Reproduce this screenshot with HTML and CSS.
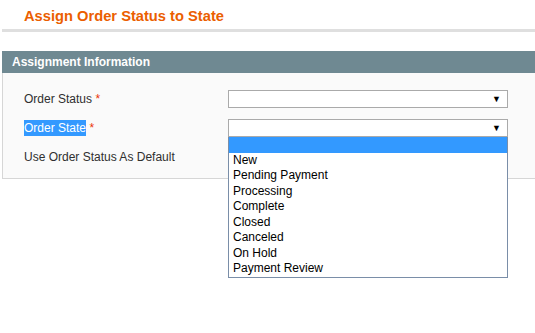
FILE: index.html
```html
<!DOCTYPE html>
<html>
<head>
<meta charset="utf-8">
<link rel="stylesheet" href="styles.css">
</head>
<body>
<div class="content-header">
  <h3 class="title">Assign Order Status to State</h3>
</div>
<div class="entry-edit">
  <div class="head">Assignment Information</div>
  <div class="fieldset">
    <div class="row">
      <div class="label">Order Status <span class="req">*</span></div>
      <div class="select"><span class="arrow">▼</span></div>
    </div>
    <div class="row">
      <div class="label"><span class="sel">Order State</span> <span class="req">*</span></div>
      <div class="select open"><span class="arrow">▼</span>
        <ul class="dropdown">
          <li class="hl">&nbsp;</li>
          <li>New</li>
          <li>Pending Payment</li>
          <li>Processing</li>
          <li>Complete</li>
          <li>Closed</li>
          <li>Canceled</li>
          <li>On Hold</li>
          <li>Payment Review</li>
        </ul>
      </div>
    </div>
    <div class="row">
      <div class="label">Use Order Status As Default</div>
    </div>
  </div>
</div>
</body>
</html>
```
FILE: styles.css
```css
html, body {
  margin: 0;
  padding: 0;
  background: #ffffff;
  font-family: "Liberation Sans", Arial, sans-serif;
}
body {
  min-height: 333px;
}
.content-header {
  margin-left: 2px;
  height: 29px;
  border-bottom: 3px solid #dfdfdf;
}
.title {
  margin: 0;
  padding: 8px 0 0 22px;
  font-size: 14.7px;
  line-height: 17px;
  font-weight: bold;
  color: #eb5e00;
}
.entry-edit {
  margin: 19px 0 0 2px;
}
.head {
  height: 22px;
  line-height: 22px;
  background: #6f8992;
  color: #ffffff;
  font-size: 12px;
  font-weight: bold;
  padding-left: 10px;
}
.fieldset {
  background: #fafafa;
  border: 1px solid #d6d6d6;
  border-top: none;
  border-right: none;
  height: 106px;
  padding: 17px 0 0 21px;
  box-sizing: border-box;
}
.row {
  display: flex;
  align-items: center;
  height: 18px;
  margin-bottom: 11px;
}
.label {
  width: 204px;
  font-size: 12px;
  color: #2f2f2f;
}
.req {
  color: #eb340a;
}
.sel {
  background: #3399ff;
  color: #ffffff;
  padding: 1px 0;
}
.select {
  position: relative;
  width: 280px;
  height: 18px;
  box-sizing: border-box;
  border: 1px solid #aaaaaa;
  background: #ffffff;
}
.arrow {
  position: absolute;
  right: 6px;
  top: 2px;
  font-size: 9px;
  line-height: 12px;
  color: #000000;
}
.dropdown {
  position: absolute;
  left: -1px;
  top: 17px;
  width: 280px;
  box-sizing: border-box;
  margin: 0;
  padding: 0;
  list-style: none;
  background: #ffffff;
  border: 1px solid #7a8ea8;
  border-top: none;
  z-index: 5;
}
.dropdown li {
  height: 15.5px;
  line-height: 15.5px;
  font-size: 12px;
  color: #000000;
  padding-left: 4px;
}
.dropdown li.hl {
  background: #3399ff;
}
```
